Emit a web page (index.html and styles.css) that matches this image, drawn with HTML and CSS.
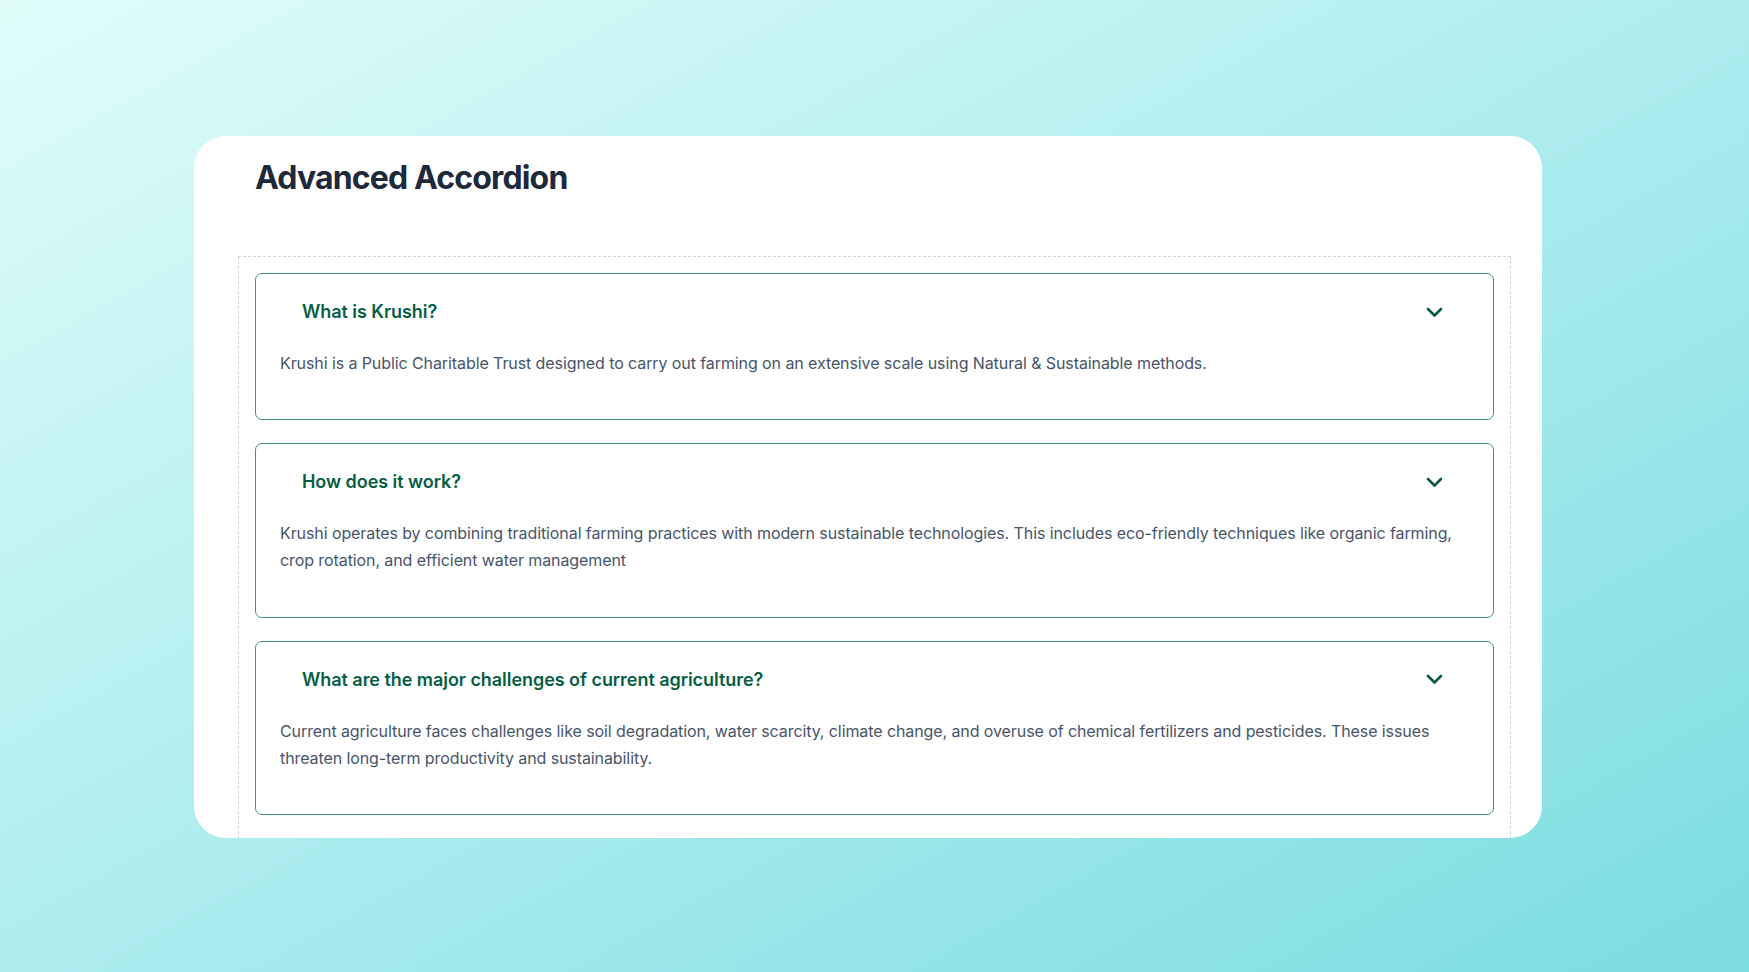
FILE: index.html
```html
<!DOCTYPE html>
<html>

<head>
	<meta charset="utf-8">
	<meta name="viewport" content="width=device-width, initial-scale=1.0">
	<title>Advanced Accordion</title>
	<link rel="stylesheet" href="styles.css">
</head>

<body>
	<div class="card">
		<h1>Advanced Accordion</h1>
		<div class="accordion">
			<div class="item">
				<div class="head">
					<h3>What is Krushi?</h3>
					<svg class="chevron" width="17" height="11" viewBox="0 0 17 11"><path d="M2 2 L8.5 8.5 L15 2" /></svg>
				</div>
				<div class="body">
					<p>Krushi is a Public Charitable Trust designed to carry out farming on an extensive scale using Natural &amp; Sustainable methods.</p>
				</div>
			</div>
			<div class="item">
				<div class="head">
					<h3>How does it work?</h3>
					<svg class="chevron" width="17" height="11" viewBox="0 0 17 11"><path d="M2 2 L8.5 8.5 L15 2" /></svg>
				</div>
				<div class="body">
					<p>Krushi operates by combining traditional farming practices with modern sustainable technologies. This includes eco-friendly techniques like organic farming, crop rotation, and efficient water management</p>
				</div>
			</div>
			<div class="item">
				<div class="head">
					<h3>What are the major challenges of current agriculture?</h3>
					<svg class="chevron" width="17" height="11" viewBox="0 0 17 11"><path d="M2 2 L8.5 8.5 L15 2" /></svg>
				</div>
				<div class="body">
					<p>Current agriculture faces challenges like soil degradation, water scarcity, climate change, and overuse of chemical fertilizers and pesticides. These issues threaten long-term productivity and sustainability.</p>
				</div>
			</div>
		</div>
	</div>
</body>

</html>
```

FILE: styles.css
```css
* {
	margin: 0;
	padding: 0;
	box-sizing: border-box;
	font-family: Inter, "Noto Sans", sans-serif;
}

body {
	width: 100%;
	height: 100vh;
	overflow: hidden;
	background: linear-gradient(to bottom right, #e0fdfa, #7bdce2);
}

.card {
	width: 1348px;
	height: 702px;
	margin: 136px 0 0 194px;
	padding: 23px 31px 0 44px;
	background: #fff;
	border-radius: 32px;
	overflow: hidden;
}

h1 {
	margin-left: 17px;
	font-size: 32px;
	line-height: 38px;
	font-weight: 700;
	letter-spacing: -0.85px;
	color: #1e293b;
}

/* runs on past the bottom of the card, which clips it */
.accordion {
	margin-top: 59px;
	padding: 16px 16px 48px;
	border: 1px dashed #d4d4d8;
	display: flex;
	flex-direction: column;
	gap: 23px;
}

.item {
	border: 1.5px solid #3f9578;
	border-radius: 7px;
}

.head {
	display: flex;
	justify-content: space-between;
	align-items: center;
	padding: 24px 50px 0 46px;
}

.head h3 {
	font-size: 18px;
	line-height: 28px;
	font-weight: 600;
	letter-spacing: -0.05px;
	color: #075e45;
}

.chevron path {
	fill: none;
	stroke: #0b5a45;
	stroke-width: 2.6;
	stroke-linecap: round;
	stroke-linejoin: round;
}

.body {
	padding: 24px 24px 42px 24px;
}

.body p {
	font-size: 16px;
	line-height: 27.2px;
	letter-spacing: -0.09px;
	color: #475569;
}
```
